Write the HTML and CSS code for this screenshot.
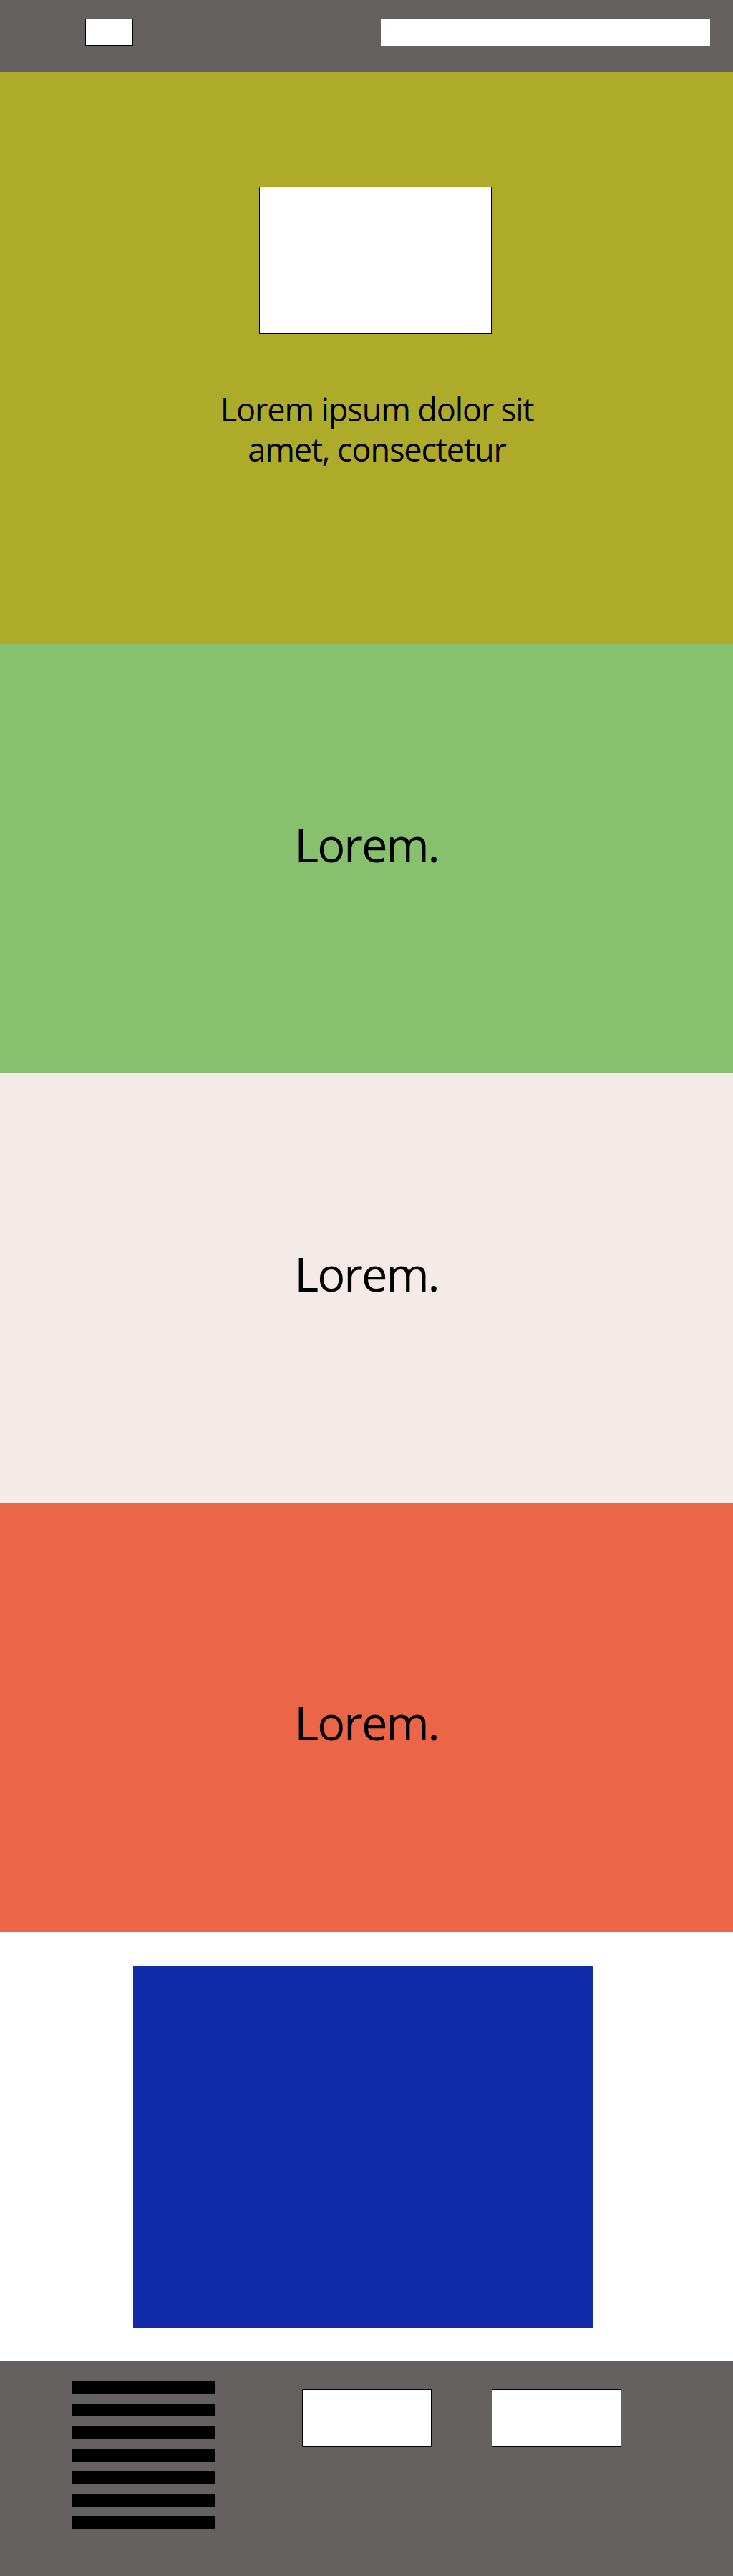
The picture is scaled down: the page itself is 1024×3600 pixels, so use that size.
FILE: index.html
```html
<!DOCTYPE html>
<html lang="en">
<head>
    <meta charset="UTF-8">
    <meta name="viewport" content="width=device-width, initial-scale=1.0">
    <title>Lorem</title>
    <link rel="stylesheet" href="styles.css">
</head>
<body>

    <header class="topbar">
        <div class="logo"></div>
        <div class="search"></div>
    </header>

    <section class="hero">
        <div class="hero-image"></div>
        <p class="hero-text">Lorem ipsum dolor sit<br>amet, consectetur</p>
    </section>

    <section class="band band-green">
        <h2>Lorem.</h2>
    </section>

    <section class="band band-pink">
        <h2>Lorem.</h2>
    </section>

    <section class="band band-orange">
        <h2>Lorem.</h2>
    </section>

    <section class="media">
        <div class="media-box"></div>
    </section>

    <footer class="footer">
        <ul class="footer-lines">
            <li></li>
            <li></li>
            <li></li>
            <li></li>
            <li></li>
            <li></li>
            <li></li>
        </ul>
        <div class="footer-box"></div>
        <div class="footer-box"></div>
    </footer>

</body>
</html>
```

FILE: styles.css
```css
/* General */
body {
    margin: 0;
    font-family: 'Open Sans', 'Noto Sans', sans-serif;
    color: #000;
    background-color: #fff;
}

/* Top bar */
.topbar {
    height: 100px;
    box-sizing: border-box;
    padding: 26px 32px 0 119px;
    background-color: #656160;
    display: flex;
    justify-content: space-between;
    align-items: flex-start;
}

.logo {
    width: 67px;
    height: 38px;
    box-sizing: border-box;
    background-color: #fff;
    border: 1px solid #000;
}

.search {
    width: 460px;
    height: 38px;
    background-color: #fff;
}

/* Hero */
.hero {
    height: 800px;
    box-sizing: border-box;
    padding: 161px 0 0 24px;
    background-color: #afab2a;
    display: flex;
    flex-direction: column;
    align-items: center;
}

.hero-image {
    width: 325px;
    height: 206px;
    box-sizing: border-box;
    background-color: #fff;
    border: 1px solid #000;
}

.hero-text {
    margin: 77px 0 0;
    padding-left: 5px;
    font-size: 45px;
    line-height: 56px;
    letter-spacing: -1.1px;
    text-align: center;
}

/* Colour bands */
.band {
    height: 600px;
    box-sizing: border-box;
    padding-top: 248px;
    text-align: center;
}

.band h2 {
    margin: 0;
    font-size: 65px;
    font-weight: normal;
    line-height: 65px;
    letter-spacing: -2px;
}

.band-green {
    background-color: #88c16e;
}

.band-pink {
    background-color: #f4ebe9;
    border-top: 1px solid #fff;
    padding-top: 247px;
}

.band-orange {
    background-color: #eb6547;
    padding-top: 275px;
}

/* Media block */
.media {
    height: 599px;
    box-sizing: border-box;
    padding: 47px 0 0 186px;
}

.media-box {
    width: 643px;
    height: 507px;
    background-color: #112cab;
}

/* Footer */
.footer {
    height: 301px;
    box-sizing: border-box;
    padding: 28px 0 0 100px;
    background-color: #656160;
    display: flex;
    align-items: flex-start;
}

.footer-lines {
    list-style: none;
    margin: 0 122px 0 0;
    padding: 0;
    width: 200px;
    display: flex;
    flex-direction: column;
    gap: 13.5px;
}

.footer-lines li {
    height: 18px;
    background-color: #000;
}

.footer-box {
    width: 181px;
    height: 81px;
    margin: 12px 84px 0 0;
    box-sizing: border-box;
    background-color: #fff;
    border: 1px solid #000;
    border-bottom-width: 2px;
}
```
